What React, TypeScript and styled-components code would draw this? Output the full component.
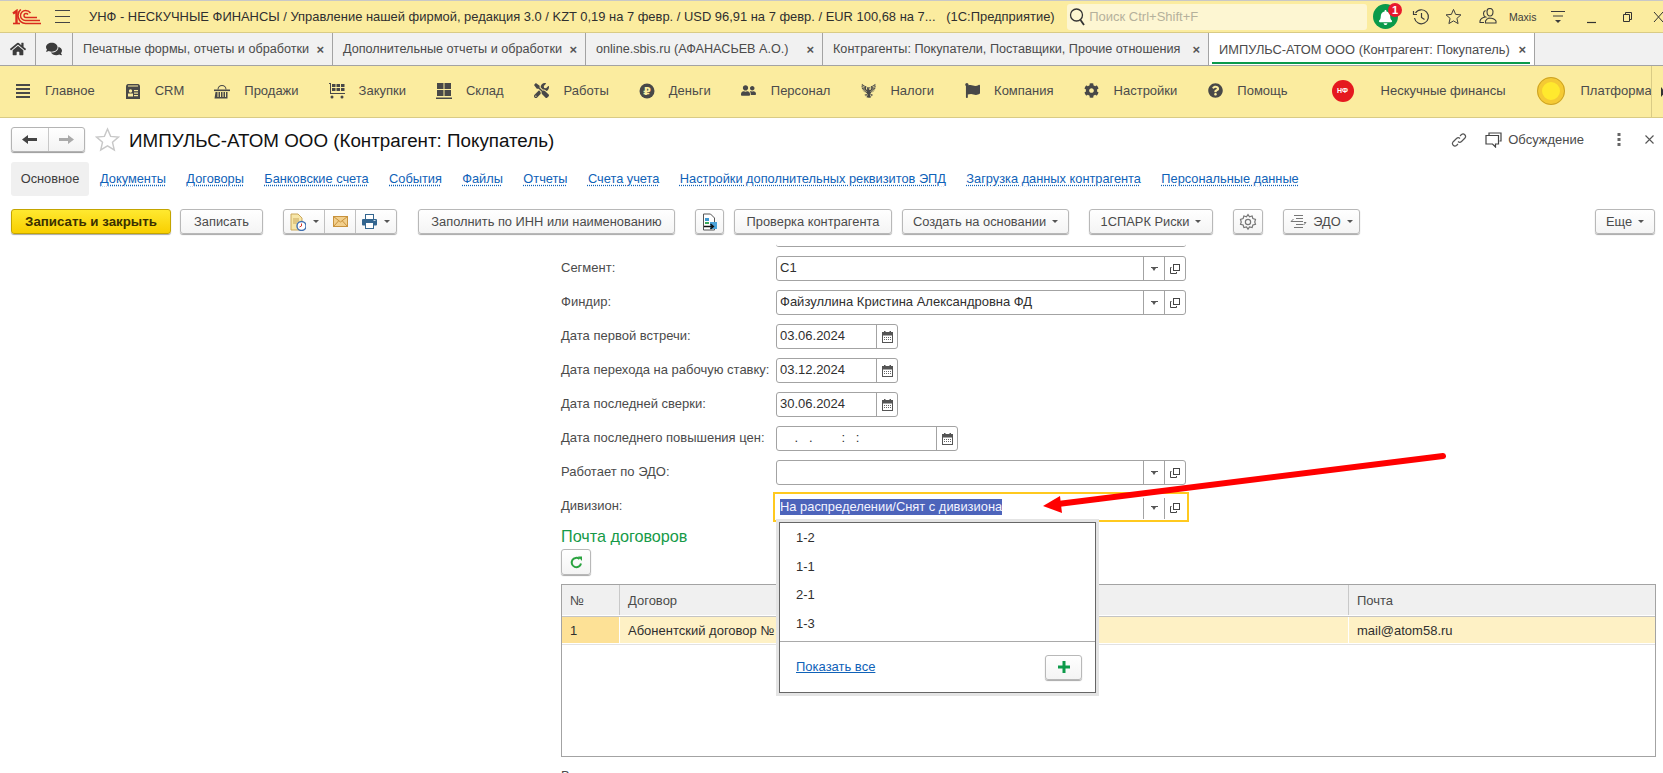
import styled, { createGlobalStyle } from 'styled-components';
import {
  FaBell,
  FaCog,
  FaFlag,
  FaHome,
  FaQuestionCircle,
  FaTools,
  FaUserFriends,
  FaComments,
} from 'react-icons/fa';
import { GiEagleEmblem } from 'react-icons/gi';

const colors = {
  yellow: '#fbec9f',
  text: '#4b4b4b',
  dark: '#2f2f2f',
  border: '#a3a3a3',
  link: '#0f62b8',
  green: '#0a9a4a',
};

const GlobalStyle = createGlobalStyle`
  html, body {
    margin: 0;
    padding: 0;
    background: #fff;
  }
  body {
    font-family: "Liberation Sans", Arial, sans-serif;
    font-size: 13px;
    color: ${colors.text};
  }
`;

const Page = styled.div`
  position: relative;
  width: 1663px;
  height: 773px;
  overflow: hidden;
  background: #fff;
`;

/* top window bar */
const TitleBar = styled.div`
  height: 31px;
  border-top: 1px solid #c8c8c8;
  border-bottom: 1px solid #d9cb85;
  background: ${colors.yellow};
  display: flex;
  align-items: center;
`;

const LogoBox = styled.div`
  width: 43px;
  padding-left: 12px;
  display: flex;
`;

const Burger = styled.div`
  width: 15px;
  height: 11px;
  margin-right: 19px;
  border-top: 1px solid #444;
  border-bottom: 1px solid #444;
  position: relative;
  &::after {
    content: '';
    position: absolute;
    left: 0;
    right: 0;
    top: 5px;
    height: 1px;
    background: #444;
  }
`;

const WindowTitle = styled.div`
  width: 979px;
  font-size: 12.93px;
  color: ${colors.dark};
  white-space: nowrap;
  overflow: hidden;
`;

const Search = styled.div`
  width: 300px;
  height: 26px;
  border-radius: 3px;
  background: #fdf6d2;
  display: flex;
  align-items: center;
  gap: 3px;
  padding-left: 2px;
  box-sizing: border-box;
  color: #b5b19c;
`;

const BellBox = styled.div`
  position: relative;
  width: 25px;
  height: 25px;
  margin-left: 6px;
  border-radius: 50%;
  background: ${colors.green};
  color: #fff;
  display: flex;
  align-items: center;
  justify-content: center;
  font-size: 15px;
  padding-top: 1px;
  box-sizing: border-box;
`;

const Badge = styled.span`
  position: absolute;
  top: -1px;
  right: -4px;
  width: 14px;
  height: 14px;
  border-radius: 50%;
  background: #e8192c;
  color: #fff;
  font-size: 11px;
  font-weight: bold;
  line-height: 14px;
  text-align: center;
`;

const TitleIcons = styled.div`
  display: flex;
  align-items: center;
  margin-left: 14px;
  color: #3c3c3c;
`;

const TitleIcon = styled.span<{ $w: number }>`
  width: ${(p) => p.$w}px;
  display: flex;
  align-items: center;
`;

const UserName = styled.span`
  width: 41px;
  font-size: 10.5px;
  color: #3c3c3c;
`;

/* open pages tabs */
const TabBar = styled.div`
  height: 32px;
  background: #f1f1f1;
  border-bottom: 1px solid ${colors.border};
  display: flex;
`;

const IconTab = styled.div<{ $w: number }>`
  width: ${(p) => p.$w}px;
  border-right: 1px solid ${colors.border};
  display: flex;
  align-items: center;
  justify-content: center;
  color: #3c3c3c;
  font-size: 16px;
`;

const PageTab = styled.div<{ $w: number; $active?: boolean }>`
  position: relative;
  width: ${(p) => p.$w}px;
  box-sizing: border-box;
  padding: 0 8px 0 10px;
  border-right: 1px solid ${colors.border};
  background: ${(p) => (p.$active ? '#fff' : 'transparent')};
  display: flex;
  align-items: center;
  justify-content: space-between;
  font-size: ${(p) => (p.$active ? 12.85 : 12.65)}px;
  color: ${colors.text};
  white-space: nowrap;
  &::after {
    content: '';
    display: ${(p) => (p.$active ? 'block' : 'none')};
    position: absolute;
    left: 3px;
    right: 4px;
    bottom: 1px;
    height: 2px;
    background: ${colors.green};
  }
`;

const TabClose = styled.span`
  font-size: 13px;
  font-weight: bold;
  color: #555;
`;

/* sections menu */
const MenuBar = styled.div`
  height: 52px;
  box-sizing: border-box;
  background: ${colors.yellow};
  border-bottom: 1px solid #d9cb85;
  padding: 0 0 2px 15px;
  display: flex;
  align-items: center;
  position: relative;
`;

const MenuItem = styled.div<{ $ml?: number; $gap?: number }>`
  display: flex;
  align-items: center;
  gap: ${(p) => p.$gap ?? 14}px;
  margin-left: ${(p) => p.$ml ?? 30}px;
  white-space: nowrap;
  &:first-child {
    margin-left: 0;
  }
`;

const MenuIcon = styled.span`
  width: 16px;
  height: 16px;
  display: flex;
  align-items: center;
  justify-content: center;
  color: #484848;
  font-size: 15px;
`;

const HfBadge = styled.span`
  width: 22px;
  height: 22px;
  border-radius: 50%;
  background: #e5191f;
  color: #fff;
  font-size: 7px;
  font-weight: bold;
  display: flex;
  align-items: center;
  justify-content: center;
`;

const Coin = styled.span`
  width: 28px;
  height: 28px;
  box-sizing: border-box;
  border-radius: 50%;
  border: 5px solid #f5ca33;
  outline: 1px solid #c9a12a;
  outline-offset: -1px;
  background: #ffe92e;
`;

const MenuEnd = styled.div`
  position: absolute;
  left: 1651px;
  top: 0;
  bottom: 0;
  width: 12px;
  border-left: 1px solid #d9cb85;
  display: flex;
  align-items: center;
  padding-left: 9px;
  box-sizing: border-box;
  &::after {
    content: '';
    border-left: 4px solid #333;
    border-top: 5px solid transparent;
    border-bottom: 5px solid transparent;
  }
`;

/* form header */
const FormHeader = styled.div`
  height: 44px;
  padding: 9px 9px 0 11px;
  box-sizing: border-box;
  display: flex;
  align-items: flex-start;
`;

const NavGroup = styled.div`
  width: 74px;
  height: 25px;
  box-sizing: border-box;
  border: 1px solid #b4b4b4;
  border-radius: 3px;
  box-shadow: 0 1px 1px #999;
  background: linear-gradient(#fff, #f3f3f3);
  display: flex;
`;

const NavCell = styled.div`
  flex: 1;
  display: flex;
  align-items: center;
  justify-content: center;
  & + & {
    border-left: 1px solid #c8c8c8;
  }
`;

const StarBox = styled.div`
  width: 26px;
  margin-left: 10px;
  display: flex;
`;

const FormTitle = styled.h1`
  margin: 0 0 0 8px;
  font-size: 18.8px;
  font-weight: normal;
  line-height: 27px;
  color: #111;
  white-space: nowrap;
`;

const HeaderActions = styled.div`
  margin-left: auto;
  display: flex;
  align-items: center;
  height: 25px;
  color: ${colors.text};
`;

const Spacer = styled.span<{ $w: number }>`
  width: ${(p) => p.$w}px;
`;

/* form tabs */
const FormTabs = styled.div`
  height: 34px;
  padding-left: 11px;
  display: flex;
  align-items: center;
  font-size: 12.8px;
`;

const CurrentTab = styled.div`
  width: 78px;
  height: 34px;
  box-sizing: border-box;
  padding-bottom: 2px;
  border-radius: 3px;
  background: #f0f0f0;
  display: flex;
  align-items: center;
  justify-content: center;
  margin-right: 11px;
  color: #3c3c3c;
`;

const TabLink = styled.a`
  color: ${colors.link};
  margin: 0 20.4px 2px 0;
  white-space: nowrap;
  text-decoration: underline dotted;
  text-underline-offset: 2px;
`;

/* command bar */
const Toolbar = styled.div`
  margin-top: 13px;
  height: 25px;
  padding: 0 8px 0 11px;
  display: flex;
`;

const Button = styled.div<{ $w: number; $h?: number; $ml?: number; $push?: boolean; $primary?: boolean }>`
  width: ${(p) => p.$w}px;
  height: ${(p) => p.$h ?? 25}px;
  margin-left: ${(p) => (p.$push ? 'auto' : `${p.$ml ?? 0}px`)};
  box-sizing: border-box;
  border: 1px solid ${(p) => (p.$primary ? '#c4a500' : '#b8b8b8')};
  border-radius: 3px;
  box-shadow: 0 1px 1px #a8a8a8;
  background: ${(p) =>
    p.$primary ? 'linear-gradient(#ffe930, #f8cf00)' : 'linear-gradient(#fff, #f4f4f4)'};
  color: ${(p) => (p.$primary ? '#3a3000' : colors.text)};
  font-size: ${(p) => (p.$primary ? 13.3 : 12.85)}px;
  font-weight: ${(p) => (p.$primary ? 'bold' : 'normal')};
  display: flex;
  align-items: center;
  justify-content: center;
  gap: 6px;
  white-space: nowrap;
`;

const ButtonGroup = styled(Button)`
  justify-content: flex-start;
  gap: 0;
`;

const GroupCell = styled.div<{ $w: number }>`
  width: ${(p) => p.$w}px;
  height: 100%;
  display: flex;
  align-items: center;
  justify-content: center;
  gap: 7px;
  & + & {
    border-left: 1px solid #c0c0c0;
  }
`;

const Caret = styled.span`
  display: inline-block;
  border-top: 3px solid #555;
  border-left: 3px solid transparent;
  border-right: 3px solid transparent;
`;

/* form body */
const FormBody = styled.div`
  padding: 8px 8px 0 561px;
`;

const CutField = styled.div`
  width: 410px;
  height: 4px;
  margin-left: 215px;
  margin-bottom: 9px;
  box-sizing: content-box;
  border-bottom: 1px solid ${colors.border};
  border-radius: 0 0 3px 3px;
`;

const Row = styled.div`
  display: flex;
  align-items: center;
  height: 25px;
  margin-bottom: 9px;
  position: relative;
`;

const Label = styled.label`
  width: 215px;
  padding-bottom: 2px;
  white-space: nowrap;
  color: ${colors.text};
`;

const Field = styled.div<{ $w: number; $focused?: boolean }>`
  width: ${(p) => p.$w}px;
  height: 25px;
  box-sizing: border-box;
  border: 1px solid ${colors.border};
  border-radius: 3px;
  display: flex;
  align-items: stretch;
  background: #fff;
  ${(p) =>
    p.$focused &&
    `
    height: 30px;
    width: 416px;
    margin-left: -3px;
    border: 2px solid #ffc91f;
    border-radius: 0;
    padding: 2px 2px 1px 3px;
    & > div:not(:first-child) {
      margin-top: 2px;
    }
  `}
`;

const FieldValue = styled.div`
  flex: 1;
  padding-left: 3px;
  line-height: 21px;
  color: ${colors.dark};
  white-space: pre;
  overflow: hidden;
`;

const FieldCell = styled.div`
  width: 20px;
  border-left: 1px solid ${colors.border};
  display: flex;
  align-items: center;
  justify-content: center;
`;

const DropMark = styled.span`
  display: block;
  width: 7px;
  height: 4px;
  background: linear-gradient(#555 1px, transparent 1px);
  position: relative;
  &::after {
    content: '';
    position: absolute;
    left: 1px;
    top: 1px;
    border-top: 3px solid #555;
    border-left: 2.5px solid transparent;
    border-right: 2.5px solid transparent;
  }
`;

const Selected = styled.span`
  margin-left: -1px;
  background: #4d64bb;
  color: #f4f4ff;
  display: inline-block;
  font-size: 12.9px;
  line-height: 16px;
`;

const DropList = styled.div`
  position: absolute;
  z-index: 3;
  left: 218px;
  top: 28px;
  width: 317px;
  height: 171px;
  box-sizing: border-box;
  background: #fff;
  border: 1px solid #666;
  box-shadow: 0 0 0 3px #e4e4e4;
  padding-top: 1px;
  display: flex;
  flex-direction: column;
`;

const DropItem = styled.div`
  height: 28.7px;
  line-height: 27px;
  padding-left: 16px;
  color: ${colors.dark};
`;

const DropFooter = styled.div`
  margin-top: 2px;
  border-top: 1px solid #a9a9a9;
  flex: 1;
  display: flex;
  align-items: flex-start;
  justify-content: space-between;
  padding: 13px 13px 0 16px;
`;

const ShowAll = styled.a`
  color: ${colors.link};
  text-decoration: underline;
  line-height: 24px;
`;

const SectionTitle = styled.div`
  font-size: 16.2px;
  line-height: 23px;
  margin-top: -3px;
  margin-bottom: 1px;
  color: #169a48;
`;

const Table = styled.div`
  margin-top: 9px;
  width: 1095px;
  height: 173px;
  box-sizing: border-box;
  border: 1px solid ${colors.border};
`;

const TableRow = styled.div<{ $head?: boolean }>`
  display: grid;
  box-sizing: border-box;
  grid-template-columns: 57px 729px 1fr;
  height: ${(p) => (p.$head ? 32 : 28)}px;
  padding-bottom: 1px;
  border-bottom: 1px solid ${(p) => (p.$head ? '#c4c4c4' : '#e2e2e2')};
`;

const Cell = styled.div<{ $kind: 'head' | 'key' | 'row' }>`
  background: ${(p) =>
    p.$kind === 'head' ? '#f0f0f0' : p.$kind === 'key' ? '#fde196' : '#fef1c5'};
  border-left: 1px solid ${(p) => (p.$kind === 'head' ? '#c9c9c9' : '#fff')};
  padding-left: 8px;
  display: flex;
  align-items: center;
  color: ${(p) => (p.$kind === 'head' ? colors.text : colors.dark)};
  white-space: nowrap;
  &:first-child {
    border-left: none;
  }
`;

const NextLabel = styled.div`
  margin-top: 11px;
  color: ${colors.text};
`;

const PointerArrow = styled.svg`
  position: absolute;
  z-index: 4;
  left: 1030px;
  top: 445px;
  pointer-events: none;
`;

function Logo1C() {
  return (
    <svg width="30" height="16" viewBox="0 0 30 16" fill="none" stroke="#d92b1e">
      <path d="M1 4.5 4.5 2V15" strokeWidth="2.4" />
      <path d="M1 14.5h7" strokeWidth="1.6" />
      <path d="M28 11.5H13.5a5 5 0 0 1 0-10c2.5 0 4 1 5 2.5" strokeWidth="1.4" />
      <path d="M29 14.5H13.5a8 8 0 0 1-4.7-14" strokeWidth="1.6" />
      <path d="M25 8.5H14a2 2 0 0 1 0-4c1 0 1.6.4 2 1" strokeWidth="1.4" />
    </svg>
  );
}

function Loupe() {
  return (
    <svg width="17" height="20" viewBox="0 0 17 20" fill="none" stroke="#333" strokeWidth="1.3">
      <circle cx="7.5" cy="8" r="6" />
      <path d="M11.5 13 15 18" strokeWidth="1.8" />
    </svg>
  );
}

function HistoryIcon() {
  return (
    <svg width="18" height="18" viewBox="0 0 18 18" fill="none" stroke="#3c3c3c" strokeWidth="1.2">
      <path d="M3.5 5A7 7 0 1 1 2.500 10" />
      <path d="M1.500 3v3.500h3.500M9.500 5v4.500l3 2" />
    </svg>
  );
}

function StarIcon({ size, color }: { size: number; color: string }) {
  return (
    <svg width={size} height={size} viewBox="0 0 24 24" fill="none" stroke={color} strokeWidth="1.4">
      <path d="m12 2 3 7 7.500.7-5.700 5 1.700 7.300L12 18.200 5.500 22l1.700-7.300-5.700-5L9 9z" />
    </svg>
  );
}

function UsersIcon() {
  return (
    <svg width="18" height="18" viewBox="0 0 18 18" fill="none" stroke="#3c3c3c" strokeWidth="1.1">
      <path d="M8 3.500a3 3 0 0 1 6 0c0 2-1 4.500-3 4.500S8 5.500 8 3.500z" />
      <path d="M10 10c3 0 6 1.500 7 3v2H6.500v-2c.5-1 2-2.500 3.500-3z" />
      <path d="M6.500 2.500C5 3 4.500 4 4.500 5.500c0 1.500.7 3 2 3.500C3.500 9.500 1.500 11 1 13v1.500h4" />
    </svg>
  );
}

function FunctionsIcon() {
  return (
    <svg width="16" height="16" viewBox="0 0 16 16" fill="none" stroke="#3c3c3c">
      <path d="M1 2.500h14M3 7h10" />
      <path d="M5 11h6l-3 3z" fill="#3c3c3c" stroke="none" />
    </svg>
  );
}

function WindowButtons() {
  return (
    <svg width="76" height="14" viewBox="0 0 76 14" fill="none" stroke="#333">
      <path d="M0 12.500h9" strokeWidth="1.2" />
      <path d="M36.500 4.500h6v7h-6zM38.500 4.500v-2h6v7h-2" />
      <path d="M67 2l9 10M76 2l-9 10" />
    </svg>
  );
}

function LinesIcon() {
  return (
    <svg width="14" height="14" viewBox="0 0 14 14" fill="#484848">
      <rect y="0" width="14" height="2" />
      <rect y="4" width="14" height="2" />
      <rect y="8" width="14" height="2" />
      <rect y="12" width="14" height="2" />
    </svg>
  );
}

function CrmIcon() {
  return (
    <svg width="16" height="16" viewBox="0 0 16 16" fill="#484848">
      <path d="M1 3.500 C1 2 2 1 3 1h10c1 0 2 1 2 2.500V16H1z" />
      <rect x="3" y="2.500" width="10" height="1" fill="#fbec9f" />
      <circle cx="5.500" cy="8" r="1.700" fill="#fbec9f" />
      <rect x="3" y="10.500" width="5" height="3" fill="#fbec9f" />
      <rect x="9" y="7" width="4" height="1.200" fill="#fbec9f" />
      <rect x="9" y="9.500" width="4" height="1.200" fill="#fbec9f" />
      <rect x="9" y="12" width="4" height="1.200" fill="#fbec9f" />
    </svg>
  );
}

function BasketIcon() {
  return (
    <svg width="16" height="16" viewBox="0 0 16 16" fill="#484848">
      <path d="M3.500 6.500a4.500 4.500 0 0 1 9 0h-1a3.500 3.500 0 0 0-7 0z" />
      <rect x="0" y="6.500" width="16" height="1.600" />
      <path d="M1.500 9h2v5h1V9h1.500v5h1V9h1.500v5h1V9h1.500v5h1V9h1.500v6.500h-13z" />
    </svg>
  );
}

function CartIcon() {
  return (
    <svg width="16" height="16" viewBox="0 0 16 16" fill="#484848">
      <rect x="3" y="1" width="3.500" height="3" />
      <rect x="7.500" y="1" width="3.500" height="3" />
      <rect x="12" y="1" width="3.500" height="3" />
      <rect x="3" y="5" width="3.500" height="3" />
      <rect x="7.500" y="5" width="3.500" height="3" />
      <rect x="12" y="5" width="3.500" height="3" />
      <path d="M0 0h2v10h14v1H1V1H0z" />
      <circle cx="3" cy="14" r="1.500" />
      <circle cx="13" cy="14" r="1.500" />
    </svg>
  );
}

function StockIcon() {
  return (
    <svg width="16" height="16" viewBox="0 0 16 16" fill="#484848">
      <rect x="1" y="0" width="6.500" height="6" />
      <rect x="8.500" y="0" width="6.500" height="6" />
      <rect x="1" y="7" width="6.500" height="6" />
      <rect x="8.500" y="7" width="6.500" height="6" />
      <rect x="0" y="14.500" width="16" height="1.500" />
    </svg>
  );
}

function RubleIcon() {
  return (
    <svg width="16" height="16" viewBox="0 0 16 16">
      <circle cx="8" cy="8" r="7.500" fill="#484848" />
      <text x="8" y="12" textAnchor="middle" fontSize="11" fontWeight="bold" fill="#fbec9f" fontFamily="DejaVu Sans, sans-serif">
        ₽
      </text>
    </svg>
  );
}

function NavArrow({ dir, color }: { dir: 'left' | 'right'; color: string }) {
  return (
    <svg width="15" height="11" viewBox="0 0 15 11" fill={color}>
      <path d={dir === 'left' ? 'M0 5.500 6 1v3h9v3H6v3z' : 'M15 5.500 9 1v3H0v3h9v3z'} />
    </svg>
  );
}

function LinkIcon() {
  return (
    <svg width="16" height="16" viewBox="0 0 16 16" fill="none" stroke="#555" strokeWidth="1.2">
      <path d="M7 9.500a2.500 2.500 0 0 0 3.500 0l3.500-3.500a2.500 2.500 0 0 0-3.500-3.500L9 4" />
      <path d="M9 6.500a2.500 2.500 0 0 0-3.500 0L2 10a2.500 2.500 0 0 0 3.500 3.500L7 12" />
    </svg>
  );
}

function DiscussIcon() {
  return (
    <svg width="17" height="16" viewBox="0 0 17 16" fill="none" stroke="#444" strokeWidth="1.2">
      <path d="M4 3V1h12v8h-1.500" />
      <path d="M1 3.500h12.500v8.500h-3v3l-3-3H1z" />
    </svg>
  );
}

function KebabIcon() {
  return (
    <svg width="4" height="13" viewBox="0 0 4 13" fill="#666">
      <rect x="0.500" y="0" width="3" height="3" />
      <rect x="0.500" y="5" width="3" height="3" />
      <rect x="0.500" y="10" width="3" height="3" />
    </svg>
  );
}

function CloseIcon() {
  return (
    <svg width="9" height="9" viewBox="0 0 9 9" stroke="#555" strokeWidth="1.1">
      <path d="M.5.500l8 8M8.500.500l-8 8" />
    </svg>
  );
}

function ReportIcon() {
  return (
    <svg width="16" height="18" viewBox="0 0 16 18">
      <path d="M1 1h7l4 4v12H1z" fill="#f7e6a8" stroke="#caa75a" />
      <path d="M3 6h6M3 8h6M3 10h4" stroke="#caa75a" />
      <circle cx="11.500" cy="13" r="4.500" fill="#fff" stroke="#3f6fb0" strokeWidth="1.4" />
      <path d="M11.500 10.500V13l-2 1" stroke="#d8392b" fill="none" />
    </svg>
  );
}

function MailIcon() {
  return (
    <svg width="15" height="11" viewBox="0 0 15 11">
      <rect x="0.500" y="0.500" width="14" height="10" fill="#f2cf8c" stroke="#c8923c" />
      <path d="M.5.500 7.500 6l7-5.500M.5 10.500 5.500 5M14.500 10.500 9.500 5" fill="none" stroke="#c8923c" />
    </svg>
  );
}

function PrintIcon() {
  return (
    <svg width="15" height="15" viewBox="0 0 15 15">
      <rect x="3.500" y="0.500" width="8" height="5" fill="#fff" stroke="#33658f" />
      <rect x="0" y="5" width="15" height="6.500" rx="1" fill="#33658f" />
      <rect x="3.500" y="8.500" width="8" height="6" fill="#fff" stroke="#33658f" />
      <rect x="11.500" y="6" width="2" height="1" fill="#bcd3e6" />
    </svg>
  );
}

function ExchangeIcon() {
  return (
    <svg width="16" height="18" viewBox="0 0 16 18">
      <path d="M1.500 1h7l4 4v12h-11z" fill="#fff" stroke="#555" />
      <rect x="3" y="5" width="4" height="3" fill="#3f97cf" />
      <rect x="3" y="9" width="4" height="2" fill="#39a85a" />
      <rect x="8" y="9" width="7" height="7" fill="#4ba3da" />
      <path d="M2 13.500h9M8.500 11l3 2.500-3 2.500" fill="none" stroke="#111" strokeWidth="1.300" />
    </svg>
  );
}

function GearIcon() {
  return (
    <svg width="18" height="18" viewBox="0 0 24 24" fill="none" stroke="#777" strokeWidth="1.600">
      <circle cx="12" cy="12" r="3.500" />
      <path d="M12 2l2 3 3.500-1 1 3.500 3.500 1-1 3.500 1 3-3.500 1-1 3.500-3.500-1-2 3-2-3-3.500 1-1-3.500-3.500-1 1-3-1-3.500 3.500-1 1-3.500 3.500 1z" />
    </svg>
  );
}

function EdoIcon() {
  return (
    <svg width="17" height="16" viewBox="0 0 17 16" fill="none" stroke="#777">
      <path d="M4 1.500h9M6 4.500h7M6 7.500h7M6 10.500h7M4 13.500h9" />
      <path d="M3.500 5 1 7.500h5M13.500 11l2.500-2.500H14" />
    </svg>
  );
}

function CalendarIcon() {
  return (
    <svg width="11" height="12" viewBox="0 0 11 12">
      <rect x="0.500" y="1.500" width="10" height="10" fill="#fff" stroke="#555" />
      <rect x="0.500" y="1.500" width="10" height="3" fill="#555" />
      <rect x="2" y="0" width="1.500" height="2.500" fill="#555" />
      <rect x="7.500" y="0" width="1.500" height="2.500" fill="#555" />
      <path d="M2 6.500h7M2 8.500h7" stroke="#666" strokeDasharray="1 1" />
    </svg>
  );
}

function OpenIcon() {
  return (
    <svg width="10" height="10" viewBox="0 0 10 10" fill="none" stroke="#444">
      <rect x="3.500" y="0.500" width="6" height="6" />
      <path d="M1.500 3.500H.5v6h6V8" />
    </svg>
  );
}

function RefreshIcon() {
  return (
    <svg width="13" height="13" viewBox="0 0 13 13" fill="none" stroke="#2aa33f" strokeWidth="2">
      <path d="M11 7.500A4.700 4.700 0 1 1 9.500 3" />
      <path d="M8 0.500h4v4.500z" fill="#2aa33f" stroke="none" />
    </svg>
  );
}

function PlusIcon() {
  return (
    <svg width="12" height="12" viewBox="0 0 12 12" fill="#0d9a4a">
      <path d="M4.500 0h3v4.500H12v3H7.500V12h-3V7.500H0v-3h4.500z" />
    </svg>
  );
}

const openTabs = [
  { title: 'Печатные формы, отчеты и обработки', w: 260 },
  { title: 'Дополнительные отчеты и обработки', w: 253 },
  { title: 'online.sbis.ru (АФАНАСЬЕВ А.О.)', w: 237 },
  { title: 'Контрагенты: Покупатели, Поставщики, Прочие отношения', w: 386 },
];

const menu = [
  { label: 'Главное', icon: <LinesIcon /> },
  { label: 'CRM', icon: <CrmIcon /> },
  { label: 'Продажи', icon: <BasketIcon /> },
  { label: 'Закупки', icon: <CartIcon /> },
  { label: 'Склад', icon: <StockIcon /> },
  { label: 'Работы', icon: <FaTools /> },
  { label: 'Деньги', icon: <RubleIcon /> },
  { label: 'Персонал', icon: <FaUserFriends /> },
  { label: 'Налоги', icon: <GiEagleEmblem /> },
  { label: 'Компания', icon: <FaFlag /> },
  { label: 'Настройки', icon: <FaCog /> },
  { label: 'Помощь', icon: <FaQuestionCircle /> },
];

const formTabs = [
  'Документы',
  'Договоры',
  'Банковские счета',
  'События',
  'Файлы',
  'Отчеты',
  'Счета учета',
  'Настройки дополнительных реквизитов ЭПД',
  'Загрузка данных контрагента',
  'Персональные данные',
];

const dates = [
  ['Дата первой встречи:', '03.06.2024'],
  ['Дата перехода на рабочую ставку:', '03.12.2024'],
  ['Дата последней сверки:', '30.06.2024'],
];

function App() {
  return (
    <Page>
      <GlobalStyle />
      <TitleBar>
        <LogoBox>
          <Logo1C />
        </LogoBox>
        <Burger />
        <WindowTitle>
          УНФ - НЕСКУЧНЫЕ ФИНАНСЫ / Управление нашей фирмой, редакция 3.0 / KZT 0,19 на 7 февр. / USD 96,91 на
          7 февр. / EUR 100,68 на 7...&nbsp;&nbsp;&nbsp;(1С:Предприятие)
        </WindowTitle>
        <Search>
          <Loupe />
          Поиск Ctrl+Shift+F
        </Search>
        <BellBox>
          <FaBell />
          <Badge>1</Badge>
        </BellBox>
        <TitleIcons>
          <TitleIcon $w={33}>
            <HistoryIcon />
          </TitleIcon>
          <TitleIcon $w={34}>
            <StarIcon size={17} color="#3c3c3c" />
          </TitleIcon>
          <TitleIcon $w={30}>
            <UsersIcon />
          </TitleIcon>
          <UserName>Maxis</UserName>
          <TitleIcon $w={37}>
            <FunctionsIcon />
          </TitleIcon>
          <WindowButtons />
        </TitleIcons>
      </TitleBar>

      <TabBar>
        <IconTab $w={35}>
          <FaHome />
        </IconTab>
        <IconTab $w={36}>
          <FaComments />
        </IconTab>
        {openTabs.map((t) => (
          <PageTab key={t.title} $w={t.w}>
            {t.title}
            <TabClose>×</TabClose>
          </PageTab>
        ))}
        <PageTab $w={326} $active>
          ИМПУЛЬС-АТОМ ООО (Контрагент: Покупатель)
          <TabClose>×</TabClose>
        </PageTab>
      </TabBar>

      <MenuBar>
        {menu.map((m) => (
          <MenuItem key={m.label}>
            <MenuIcon>{m.icon}</MenuIcon>
            {m.label}
          </MenuItem>
        ))}
        <MenuItem $ml={44} $gap={27}>
          <HfBadge>НФ</HfBadge>
          Нескучные финансы
        </MenuItem>
        <MenuItem $ml={31} $gap={16}>
          <Coin />
          Платформа
        </MenuItem>
        <MenuEnd />
      </MenuBar>

      <FormHeader>
        <NavGroup>
          <NavCell>
            <NavArrow dir="left" color="#444" />
          </NavCell>
          <NavCell>
            <NavArrow dir="right" color="#aaa" />
          </NavCell>
        </NavGroup>
        <StarBox>
          <StarIcon size={25} color="#c8c8c8" />
        </StarBox>
        <FormTitle>ИМПУЛЬС-АТОМ ООО (Контрагент: Покупатель)</FormTitle>
        <HeaderActions>
          <LinkIcon />
          <Spacer $w={18} />
          <DiscussIcon />
          <Spacer $w={6} />
          Обсуждение
          <Spacer $w={33} />
          <KebabIcon />
          <Spacer $w={24} />
          <CloseIcon />
        </HeaderActions>
      </FormHeader>

      <FormTabs>
        <CurrentTab>Основное</CurrentTab>
        {formTabs.map((t) => (
          <TabLink key={t}>{t}</TabLink>
        ))}
      </FormTabs>

      <Toolbar>
        <Button $w={160} $primary>
          Записать и закрыть
        </Button>
        <Button $w={83} $ml={9}>
          Записать
        </Button>
        <ButtonGroup $w={114} $ml={20}>
          <GroupCell $w={41}>
            <ReportIcon />
            <Caret />
          </GroupCell>
          <GroupCell $w={30}>
            <MailIcon />
          </GroupCell>
          <GroupCell $w={41}>
            <PrintIcon />
            <Caret />
          </GroupCell>
        </ButtonGroup>
        <Button $w={257} $ml={21}>
          Заполнить по ИНН или наименованию
        </Button>
        <Button $w={29} $ml={20}>
          <ExchangeIcon />
        </Button>
        <Button $w={158} $ml={10}>
          Проверка контрагента
        </Button>
        <Button $w={167} $ml={10}>
          Создать на основании
          <Caret />
        </Button>
        <Button $w={124} $ml={20}>
          1СПАРК Риски
          <Caret />
        </Button>
        <Button $w={30} $ml={20}>
          <GearIcon />
        </Button>
        <Button $w={77} $ml={20}>
          <EdoIcon />
          ЭДО
          <Caret />
        </Button>
        <Button $w={60} $push>
          Еще
          <Caret />
        </Button>
      </Toolbar>

      <FormBody>
        <CutField />
        <Row>
          <Label>Сегмент:</Label>
          <Field $w={410}>
            <FieldValue>С1</FieldValue>
            <FieldCell>
              <DropMark />
            </FieldCell>
            <FieldCell>
              <OpenIcon />
            </FieldCell>
          </Field>
        </Row>
        <Row>
          <Label>Финдир:</Label>
          <Field $w={410}>
            <FieldValue>Файзуллина Кристина Александровна ФД</FieldValue>
            <FieldCell>
              <DropMark />
            </FieldCell>
            <FieldCell>
              <OpenIcon />
            </FieldCell>
          </Field>
        </Row>
        {dates.map(([label, value]) => (
          <Row key={label}>
            <Label>{label}</Label>
            <Field $w={122}>
              <FieldValue>{value}</FieldValue>
              <FieldCell>
                <CalendarIcon />
              </FieldCell>
            </Field>
          </Row>
        ))}
        <Row>
          <Label>Дата последнего повышения цен:</Label>
          <Field $w={182}>
            <FieldValue>{'    .   .        :   :'}</FieldValue>
            <FieldCell>
              <CalendarIcon />
            </FieldCell>
          </Field>
        </Row>
        <Row>
          <Label>Работает по ЭДО:</Label>
          <Field $w={410}>
            <FieldValue />
            <FieldCell>
              <DropMark />
            </FieldCell>
            <FieldCell>
              <OpenIcon />
            </FieldCell>
          </Field>
        </Row>
        <Row>
          <Label>Дивизион:</Label>
          <Field $w={410} $focused>
            <FieldValue>
              <Selected>На распределении/Снят с дивизиона</Selected>
            </FieldValue>
            <FieldCell>
              <DropMark />
            </FieldCell>
            <FieldCell>
              <OpenIcon />
            </FieldCell>
          </Field>
          <DropList>
            <DropItem>1-2</DropItem>
            <DropItem>1-1</DropItem>
            <DropItem>2-1</DropItem>
            <DropItem>1-3</DropItem>
            <DropFooter>
              <ShowAll>Показать все</ShowAll>
              <Button $w={37}>
                <PlusIcon />
              </Button>
            </DropFooter>
          </DropList>
        </Row>
        <SectionTitle>Почта договоров</SectionTitle>
        <Button $w={30} $h={26}>
          <RefreshIcon />
        </Button>
        <Table>
          <TableRow $head>
            <Cell $kind="head">№</Cell>
            <Cell $kind="head">Договор</Cell>
            <Cell $kind="head">Почта</Cell>
          </TableRow>
          <TableRow>
            <Cell $kind="key">1</Cell>
            <Cell $kind="row">Абонентский договор № 1</Cell>
            <Cell $kind="row">mail@atom58.ru</Cell>
          </TableRow>
        </Table>
        <NextLabel>В</NextLabel>
      </FormBody>

      <PointerArrow width="420" height="70" viewBox="0 0 420 70">
        <path d="M413 11 28 59" stroke="#ff0000" strokeWidth="6" strokeLinecap="round" />
        <path d="M13 61 30 51 32 68z" fill="#ff0000" />
      </PointerArrow>
    </Page>
  );
}

export default App;
